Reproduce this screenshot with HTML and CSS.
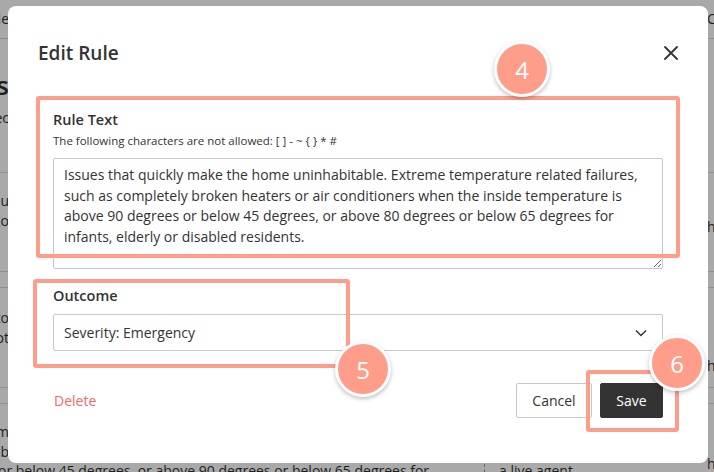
FILE: index.html
```html
<!DOCTYPE html>
<html lang="en">
<head>
<meta charset="utf-8">
<title>Edit Rule</title>
<link rel="stylesheet" href="styles.css">
</head>
<body>
<div class="page">
  <div class="bgrow r1 ln"><span class="l">Rule</span><span class="r">Close</span></div>
  <div class="bgrow r2"><span class="l big">Rules</span><span class="r"></span></div>
  <div class="bgrow r3 ln"><span class="l">Selec</span><span class="r"></span></div>
  <div class="bgrow r4 ln"><span class="l">Issues that qu<br>such as co</span><span class="r rh1">h</span></div>
  <div class="bgrow r5 ln"><span class="l"></span><span class="r"></span></div>
  <div class="bgrow r6 ln"><span class="l">Issues to<br>not</span><span class="r rh2">h</span></div>
  <div class="bgrow r5 ln"><span class="l"></span><span class="r"></span></div>
  <div class="bgrow r8"><span class="l">Issues m<br>ab</span><span class="r rh3">h</span></div>
  <div class="bgrow last"><span class="wide">or below 45 degrees, or above 90 degrees or below 65 degrees for</span><span class="sep"></span><span class="agent">a live agent</span></div>
</div>

<div class="modal">
  <div class="modal-head">
    <h2 class="title">Edit Rule</h2>
    <button class="close" aria-label="Close">
      <svg width="14" height="14" viewBox="0 0 14 14"><path d="M1 1L13 13M13 1L1 13" stroke="#333" stroke-width="1.8" stroke-linecap="round"/></svg>
    </button>
  </div>
  <div class="modal-body">
    <label class="label">Rule Text</label>
    <p class="help">The following characters are not allowed: [ ] - ~ { } * #</p>
    <textarea class="area">Issues that quickly make the home uninhabitable. Extreme temperature related failures, such as completely broken heaters or air conditioners when the inside temperature is above 90 degrees or below 45 degrees, or above 80 degrees or below 65 degrees for infants, elderly or disabled residents.</textarea>
    <label class="label outcome">Outcome</label>
    <div class="select">
      <span>Severity: Emergency</span>
      <svg width="12" height="8" viewBox="0 0 12 8"><path d="M1 1.5L6 6.5L11 1.5" fill="none" stroke="#333" stroke-width="1.5"/></svg>
    </div>
  </div>
  <div class="modal-foot">
    <a class="delete">Delete</a>
    <div class="btns">
      <button class="btn cancel">Cancel</button>
      <button class="btn save">Save</button>
    </div>
  </div>
</div>

<div class="hl hl4"></div>
<div class="hl hl5"></div>
<div class="hl hl6"></div>
<div class="badge b4">4</div>
<div class="badge b5">5</div>
<div class="badge b6">6</div>
</body>
</html>
```
FILE: styles.css
```css
* { box-sizing: border-box; }
html, body { margin: 0; padding: 0; }
body {
  width: 714px;
  height: 472px;
  overflow: hidden;
  position: relative;
  background: #a9a9a9;
  font-family: "Open Sans", "Noto Sans", sans-serif;
  color: #333;
}
.page {
  display: flex;
  flex-direction: column;
  height: 472px;
  color: #1e1e1e;
  font-size: 14px;
  line-height: 20px;
}
.bgrow { display: flex; justify-content: space-between; align-items: flex-start; }
.bgrow.ln { border-bottom: 1px solid #8e8e8e; }
.r1 { height: 39px; align-items: center; }
.r2 { height: 61px; align-items: flex-end; }
.r3 { height: 73px; padding-top: 8px; }
.r4 { height: 99px; padding-top: 18px; }
.r5 { height: 16px; }
.r6 { height: 100px; padding-top: 20px; }
.r8 { height: 58px; padding-top: 18px; }
.l { width: 9px; overflow: hidden; display: flex; justify-content: flex-end; white-space: nowrap; text-align: right; }
.r { width: 7px; overflow: hidden; white-space: nowrap; }
.rh1 { padding-top: 26px; }
.rh2 { padding-top: 48px; }
.rh3 { padding-top: 32px; }
.big { font-size: 26px; font-weight: 600; line-height: 30px; }
.last { height: 10px; align-items: flex-start; justify-content: flex-start; white-space: nowrap; overflow: visible; }
.wide { margin-left: -2px; line-height: 18px; }
.sep { width: 0; height: 14px; border-left: 1px dashed #666; margin-left: 55px; margin-top: 2px; }
.agent { margin-left: 14px; line-height: 18px; }

.modal {
  position: absolute;
  left: 8px;
  top: 6px;
  width: 700px;
  height: 457px;
  background: #fff;
  border-radius: 8px;
  display: flex;
  flex-direction: column;
}
.modal-head {
  display: flex;
  justify-content: space-between;
  align-items: center;
  padding: 26px 30px 0 30px;
  height: 68px;
}
.title { margin: 0; font-size: 19px; font-weight: 600; color: #333; line-height: 26px; }
.close { border: 0; background: none; padding: 0; width: 14px; height: 14px; display: flex; }
.modal-body { padding: 36px 45px 0 45px; display: flex; flex-direction: column; }
.label { font-size: 14.5px; font-weight: 600; color: #333; line-height: 20px; }
.help { margin: 3px 0 0 0; font-size: 11.5px; line-height: 16px; color: #333; }
.area {
  margin-top: 9px;
  width: 610px;
  height: 111px;
  border: 1px solid #c8c8c8;
  border-radius: 2px;
  padding: 6px 10px;
  font-family: "Open Sans", "Noto Sans", sans-serif;
  font-size: 14px;
  line-height: 20.7px;
  color: #333;
  resize: vertical;
  display: block;
}
.outcome { margin-top: 17px; }
.select {
  margin-top: 8px;
  width: 610px;
  height: 37px;
  border: 1px solid #c8c8c8;
  border-radius: 2px;
  display: flex;
  justify-content: space-between;
  align-items: center;
  padding: 0 15px 0 10px;
  font-size: 14px;
}
.modal-foot {
  display: flex;
  justify-content: space-between;
  align-items: center;
  padding: 32px 45px 0 46px;
}
.delete { color: #f26a6a; font-size: 14px; }
.btns { display: flex; gap: 8px; }
.btn {
  height: 35px;
  font-family: "Open Sans", "Noto Sans", sans-serif;
  font-size: 14px;
  border-radius: 2px;
  padding: 0;
}
.cancel { width: 76px; background: #fff; border: 1px solid #c8c8c8; color: #333; }
.save { width: 63px; background: #333; border: 1px solid #333; color: #fff; }

.hl { position: absolute; border: 4px solid #ff9d8b; border-radius: 3px; }
.hl4 { left: 36px; top: 96px; width: 644px; height: 162px; }
.hl5 { left: 33px; top: 279px; width: 317px; height: 89px; }
.hl6 { left: 586px; top: 370px; width: 93px; height: 62px; }
.badge {
  position: absolute;
  width: 56px;
  height: 56px;
  border-radius: 50%;
  background: #ff9d8b;
  border: 3px solid #fff;
  box-shadow: 0 2px 4px rgba(0,0,0,0.25);
  color: #fff;
  font-size: 24px;
  display: flex;
  align-items: center;
  justify-content: center;
}
.b4 { left: 494px; top: 41px; }
.b5 { left: 335px; top: 341px; }
.b6 { left: 649px; top: 335px; }
```
